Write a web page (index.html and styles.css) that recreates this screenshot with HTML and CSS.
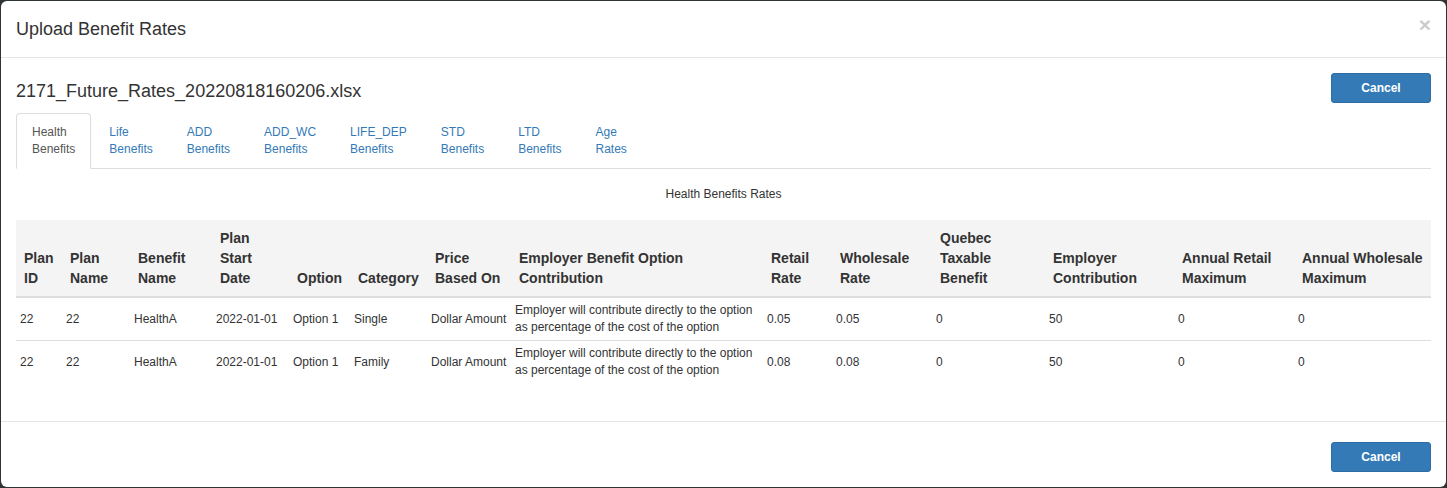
FILE: index.html
```html
<!DOCTYPE html>
<html lang="en">
<head>
<meta charset="utf-8">
<title>Upload Benefit Rates</title>
<link rel="stylesheet" href="styles.css">
</head>
<body>
<div class="modal">
  <div class="modal-header">
    <h4 class="modal-title">Upload Benefit Rates</h4>
    <button class="close" type="button">&times;</button>
  </div>
  <div class="modal-body">
    <div class="file-row">
      <h4 class="file-name">2171_Future_Rates_20220818160206.xlsx</h4>
      <button class="btn" type="button">Cancel</button>
    </div>
    <ul class="nav-tabs">
      <li class="active"><a>Health<br>Benefits</a></li>
      <li><a>Life<br>Benefits</a></li>
      <li><a>ADD<br>Benefits</a></li>
      <li><a>ADD_WC<br>Benefits</a></li>
      <li><a>LIFE_DEP<br>Benefits</a></li>
      <li><a>STD<br>Benefits</a></li>
      <li><a>LTD<br>Benefits</a></li>
      <li><a>Age<br>Rates</a></li>
    </ul>
    <div class="caption">Health Benefits Rates</div>
    <table class="rates">
      <colgroup>
        <col class="c1"><col class="c2"><col class="c3"><col class="c4"><col class="c5"><col class="c6"><col class="c7">
        <col class="c8"><col class="c9"><col class="c10"><col class="c11"><col class="c12"><col class="c13"><col class="c14">
      </colgroup>
      <thead>
        <tr>
          <th>Plan ID</th>
          <th>Plan Name</th>
          <th>Benefit Name</th>
          <th>Plan Start Date</th>
          <th class="nowrap">Option</th>
          <th>Category</th>
          <th>Price Based On</th>
          <th>Employer Benefit Option Contribution</th>
          <th>Retail Rate</th>
          <th>Wholesale Rate</th>
          <th>Quebec Taxable Benefit</th>
          <th>Employer Contribution</th>
          <th>Annual Retail Maximum</th>
          <th>Annual Wholesale Maximum</th>
        </tr>
      </thead>
      <tbody>
        <tr>
          <td>22</td><td>22</td><td>HealthA</td><td>2022-01-01</td><td>Option 1</td><td>Single</td><td>Dollar Amount</td>
          <td class="wrap">Employer will contribute directly to the option as percentage of the cost of the option</td>
          <td>0.05</td><td>0.05</td><td>0</td><td>50</td><td>0</td><td>0</td>
        </tr>
        <tr>
          <td>22</td><td>22</td><td>HealthA</td><td>2022-01-01</td><td>Option 1</td><td>Family</td><td>Dollar Amount</td>
          <td class="wrap">Employer will contribute directly to the option as percentage of the cost of the option</td>
          <td>0.08</td><td>0.08</td><td>0</td><td>50</td><td>0</td><td>0</td>
        </tr>
      </tbody>
    </table>
  </div>
  <div class="modal-footer">
    <button class="btn" type="button">Cancel</button>
  </div>
</div>
</body>
</html>
```

FILE: styles.css
```css
* { box-sizing: border-box; }

html, body {
  margin: 0;
  padding: 0;
  height: 100%;
}

body {
  background: #2f3437;
  font-family: "Liberation Sans", Arial, Helvetica, sans-serif;
  font-size: 14px;
  line-height: 1.42857;
  color: #333;
  padding: 1px;
}

.modal {
  background: #fff;
  border-radius: 6px;
  height: 486px;
  display: flex;
  flex-direction: column;
}

.modal-header {
  display: flex;
  justify-content: space-between;
  align-items: flex-start;
  padding: 15px;
  border-bottom: 1px solid #e5e5e5;
}

.modal-title {
  margin: 0;
  font-size: 18px;
  font-weight: normal;
  line-height: 26px;
  color: #333;
}

.close {
  margin-top: -2px;
  padding: 0;
  border: 0;
  background: transparent;
  font-family: "Liberation Sans", Arial, sans-serif;
  font-size: 21px;
  font-weight: bold;
  line-height: 1;
  color: #000;
  opacity: 0.2;
  cursor: pointer;
}

.modal-body {
  padding: 15px 15px 15px;
  flex: 1;
}

.file-row {
  display: flex;
  justify-content: space-between;
  align-items: flex-start;
  height: 31px;
}

.file-name {
  margin: 6px 0 0;
  font-size: 18px;
  font-weight: normal;
  line-height: 25px;
  color: #333;
}

.btn {
  width: 100px;
  height: 30px;
  padding: 5px 10px;
  font-family: "Liberation Sans", Arial, sans-serif;
  font-size: 12px;
  font-weight: bold;
  line-height: 18px;
  color: #fff;
  background: #337ab7;
  border: 1px solid #2e6da4;
  border-radius: 3px;
  cursor: pointer;
}

.nav-tabs {
  list-style: none;
  margin: 9px 0 0;
  padding: 0;
  display: flex;
  border-bottom: 1px solid #ddd;
}

.nav-tabs li {
  margin-bottom: -1px;
  margin-right: 2px;
}

.nav-tabs a {
  display: block;
  padding: 10px 15px;
  font-size: 12px;
  line-height: 17px;
  color: #337ab7;
  border: 1px solid transparent;
  border-radius: 4px 4px 0 0;
  cursor: pointer;
}

.nav-tabs li.active a {
  color: #555;
  background: #fff;
  border-color: #ddd #ddd transparent;
}

.caption {
  margin: 17px 0 17px;
  text-align: center;
  font-size: 12px;
  line-height: 17px;
  color: #333;
}

.rates {
  width: 100%;
  table-layout: fixed;
  border-collapse: collapse;
  border-spacing: 0;
  margin-bottom: 23px;
}

.c1 { width: 46px; }
.c2 { width: 68px; }
.c3 { width: 82px; }
.c4 { width: 77px; }
.c5 { width: 61px; }
.c6 { width: 77px; }
.c7 { width: 84px; }
.c8 { width: 252px; }
.c9 { width: 69px; }
.c10 { width: 100px; }
.c11 { width: 113px; }
.c12 { width: 129px; }
.c13 { width: 120px; }
.c14 { width: 137px; }

.rates th {
  background: #f4f4f4;
  padding: 8px;
  text-align: left;
  vertical-align: bottom;
  font-size: 14px;
  font-weight: bold;
  line-height: 20px;
  color: #333;
  border-bottom: 2px solid #ddd;
}

.rates th.nowrap { white-space: nowrap; }

.rates td {
  padding: 4px;
  font-size: 12px;
  line-height: 17px;
  height: 42px;
  vertical-align: middle;
  white-space: nowrap;
  color: #333;
}

.rates td.wrap { white-space: normal; }

.rates tbody tr + tr td {
  border-top: 1px solid #ddd;
}

.modal-footer {
  display: flex;
  justify-content: flex-end;
  padding: 20px 15px 15px;
  border-top: 1px solid #e5e5e5;
}
```
